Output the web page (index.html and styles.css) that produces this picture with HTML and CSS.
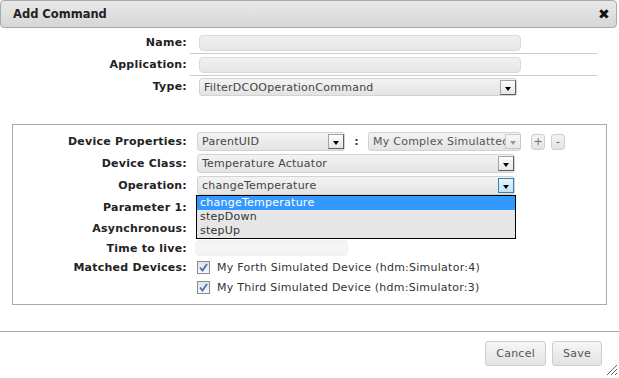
FILE: index.html
```
<!DOCTYPE html>
<html lang="en">
<head>
  <meta charset="UTF-8">
  <title>Add Command</title>
  <link rel="stylesheet" href="styles.css">
</head>
<body>
  <div class="dialog">
    <div class="titlebar">
      <span class="title">Add Command</span>
      <span class="close">&#10006;</span>
    </div>

    <!-- main command fields -->
    <div class="top-rows">
      <div class="top-row">
        <label class="top-label">Name:</label>
        <div class="top-field lined"><div class="text-input wide"></div></div>
      </div>
      <div class="top-row">
        <label class="top-label">Application:</label>
        <div class="top-field lined"><div class="text-input wide"></div></div>
      </div>
      <div class="top-row">
        <label class="top-label">Type:</label>
        <div class="top-field">
          <div class="select type-select">
            <span class="select-text">FilterDCOOperationCommand</span>
            <span class="arrow"></span>
          </div>
        </div>
      </div>
    </div>

    <!-- device filter -->
    <div class="box">
      <div class="row">
        <label class="row-label">Device Properties:</label>
        <div class="select prop-select">
          <span class="select-text">ParentUID</span>
          <span class="arrow"></span>
        </div>
        <span class="colon">:</span>
        <div class="select value-select disabled">
          <span class="select-text">My Complex Simulatted</span>
          <span class="arrow"></span>
        </div>
        <span class="mini-btn plus">+</span>
        <span class="mini-btn">-</span>
      </div>
      <div class="row">
        <label class="row-label">Device Class:</label>
        <div class="select full-select">
          <span class="select-text">Temperature Actuator</span>
          <span class="arrow"></span>
        </div>
      </div>
      <div class="row">
        <label class="row-label">Operation:</label>
        <div class="select full-select open">
          <span class="select-text">changeTemperature</span>
          <span class="arrow"></span>
          <ul class="option-list">
            <li class="selected">changeTemperature</li>
            <li>stepDown</li>
            <li>stepUp</li>
          </ul>
        </div>
      </div>
      <div class="row">
        <label class="row-label">Parameter 1:</label>
      </div>
      <div class="row short">
        <label class="row-label">Asynchronous:</label>
      </div>
      <div class="row ttl">
        <label class="row-label">Time to live:</label>
        <div class="text-input ttl-input"></div>
      </div>
      <div class="row check-row">
        <label class="row-label">Matched Devices:</label>
        <span class="checkbox"><svg width="9" height="9" viewBox="0 0 9 9"><path d="M1 4.5 L3.5 7.5 L8 1" fill="none" stroke="#4a6fb5" stroke-width="1.8"/></svg></span>
        <span class="check-text">My Forth Simulated Device (hdm:Simulator:4)</span>
      </div>
      <div class="row check-row">
        <label class="row-label"></label>
        <span class="checkbox"><svg width="9" height="9" viewBox="0 0 9 9"><path d="M1 4.5 L3.5 7.5 L8 1" fill="none" stroke="#4a6fb5" stroke-width="1.8"/></svg></span>
        <span class="check-text">My Third Simulated Device (hdm:Simulator:3)</span>
      </div>
    </div>

    <div class="button-pane">
      <button class="btn">Cancel</button>
      <button class="btn">Save</button>
      <svg class="grip" width="12" height="12" viewBox="0 0 12 12">
        <path d="M11 1 L1 11 M11 5 L5 11 M11 9 L9 11" stroke="#666" stroke-width="1"/>
      </svg>
    </div>
  </div>
</body>
</html>
```

FILE: styles.css
```
/* base */
body {
  margin: 0;
  font-family: 'DejaVu Sans', Verdana, sans-serif;
  font-size: 11px;
  letter-spacing: 0.25px;
  color: #222;
  background: #fff;
}
.dialog {
  width: 619px;
  height: 378px;
  position: relative;
  overflow: hidden;
}
/* title bar */
.titlebar {
  width: 617px;
  height: 28px;
  box-sizing: border-box;
  border: 1px solid #aaa;
  border-radius: 4px;
  background: linear-gradient(#e9e9e9, #d6d6d6);
  display: flex;
  align-items: center;
  padding: 0 6px 0 12px;
}
.title {
  font-weight: bold;
  font-size: 11.5px;
  letter-spacing: 0;
  color: #222;
}
.close {
  margin-left: auto;
  font-size: 14px;
  color: #111;
}
/* top rows */
.top-rows {
  margin-top: 4px;
}
.top-row {
  display: flex;
  height: 22px;
}
.top-label {
  width: 187px;
  text-align: right;
  font-weight: bold;
  line-height: 21px;
}
.top-field {
  width: 407px;
  margin-left: 3px;
  padding-left: 9px;
  box-sizing: border-box;
  display: flex;
  align-items: center;
}
.top-field.lined {
  border-bottom: 1px solid #ccc;
  align-items: flex-start;
  padding-top: 3px;
}
.text-input {
  height: 16px;
  box-sizing: border-box;
  border: 1px solid #dadada;
  border-radius: 4px;
  background: linear-gradient(#f0f0f0, #e6e6e6);
}
.text-input.wide {
  width: 322px;
}
/* selects */
.select {
  position: relative;
  display: flex;
  align-items: center;
  height: 19px;
  box-sizing: border-box;
  border: 1px solid #d2d2d2;
  border-radius: 3px;
  background: linear-gradient(#f3f3f3, #e3e3e3);
  padding-left: 4px;
  color: #444;
}
.select-text {
  white-space: nowrap;
  overflow: hidden;
  flex: 1;
}
.arrow {
  flex: none;
  width: 16px;
  height: 15px;
  box-sizing: border-box;
  border: 1px solid;
  border-color: #a4a4a4 #5e5e5e #5e5e5e #a4a4a4;
  background: linear-gradient(#fefefe, #e6e6e6);
  display: flex;
  justify-content: center;
  align-items: center;
}
.arrow::after {
  content: '';
  margin-top: 3px;
  border-top: 4px solid #000;
  border-left: 3.5px solid transparent;
  border-right: 3.5px solid transparent;
}
.type-select {
  width: 318px;
  height: 18px;
}
.prop-select {
  width: 148px;
}
.value-select {
  width: 153px;
}
.value-select .select-text {
  flex: none;
  width: 138px;
  margin-right: -6px;
}
.disabled {
  color: #555;
}
.disabled .arrow {
  position: relative;
  border-color: #c8c8c8;
  background: linear-gradient(#f6f6f6, #e8e8e8);
}
.disabled .arrow::after {
  border-top-color: #999;
}
.full-select {
  width: 318px;
}
.open .arrow {
  border-color: #3c7fb1;
  background: linear-gradient(#e8f5fd, #bfe3f9);
}
/* open list */
.option-list {
  position: absolute;
  top: 100%;
  left: -2px;
  right: -2px;
  margin: 1px 0 0;
  padding: 0;
  list-style: none;
  background: #e6e6e6;
  border: 1px solid #000;
  z-index: 2;
  color: #333;
}
.option-list li {
  height: 14px;
  line-height: 14px;
  padding-left: 3px;
}
.option-list li.selected {
  background: #3399ff;
  color: #fff;
}
/* device filter box */
.box {
  margin: 26px 0 0 12px;
  width: 595px;
  height: 181px;
  box-sizing: border-box;
  border: 1px solid #aaa;
  padding-top: 7px;
}
.row {
  display: flex;
  align-items: center;
  height: 19px;
  margin-bottom: 3px;
}
.row.short {
  height: 17px;
}
.row.ttl {
  height: 16px;
}
.row.check-row {
  height: 17px;
}
.row-label {
  width: 174px;
  flex: none;
  text-align: right;
  font-weight: bold;
  margin-right: 10px;
}
.colon {
  width: 23px;
  text-align: center;
  font-weight: bold;
  color: #333;
}
.mini-btn {
  width: 14px;
  height: 16px;
  box-sizing: border-box;
  border: 1px solid #cfcfcf;
  border-radius: 3px;
  background: linear-gradient(#f4f4f4, #e2e2e2);
  color: #555;
  text-align: center;
  line-height: 14px;
  letter-spacing: 0;
  margin-left: 6px;
}
.mini-btn.plus {
  margin-left: 10px;
  color: #5a6b8a;
}
.ttl-input {
  width: 153px;
  margin-left: -2px;
  border-color: #f0f0f0;
  background: #f4f4f4;
}
.checkbox {
  width: 13px;
  height: 13px;
  box-sizing: border-box;
  border: 1px solid #8c8c8c;
  background: linear-gradient(#dfe3ea, #f7f7f7);
  display: flex;
  justify-content: center;
  align-items: center;
}
.check-text {
  margin-left: 7px;
  color: #333;
}
/* buttons */
.button-pane {
  margin-top: 26px;
  border-top: 1px solid #aaa;
  height: 46px;
  display: flex;
  justify-content: flex-end;
  align-items: flex-start;
  padding: 9px 17px 0 0;
  box-sizing: border-box;
  position: relative;
}
.btn {
  height: 25px;
  box-sizing: border-box;
  border: 1px solid #cdcdcd;
  border-radius: 3px;
  background: linear-gradient(#f6f6f6, #e2e2e2);
  color: #555;
  font-family: 'DejaVu Sans', Verdana, sans-serif;
  font-size: 11px;
  letter-spacing: 0.25px;
  padding: 0 10px;
  margin-left: 6px;
}
.grip {
  position: absolute;
  right: 1px;
  bottom: 1px;
}
```
